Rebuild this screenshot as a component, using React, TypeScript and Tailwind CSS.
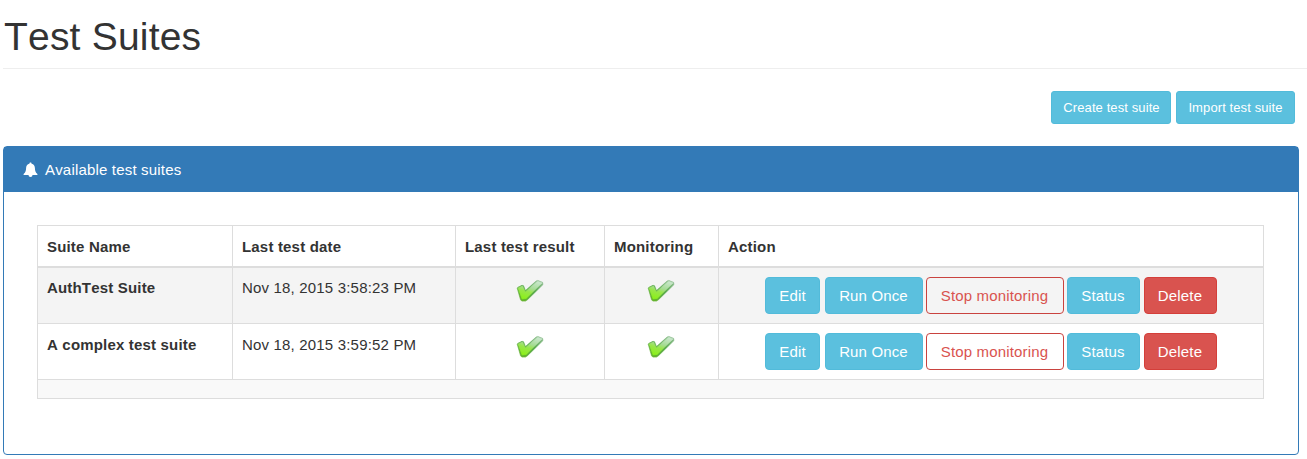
import React from "react";

type Suite = { name: string; date: string };

const suites: Suite[] = [
  { name: "AuthTest Suite", date: "Nov 18, 2015 3:58:23 PM" },
  { name: "A complex test suite", date: "Nov 18, 2015 3:59:52 PM" },
];

function BellIcon() {
  return (
    <svg width="15" height="16" viewBox="0 0 15 16" fill="#fff" className="block shrink-0">
      <path d="M7.5 0.6c.7 0 1.1.5 1.1 1.2 2.200.5 3.200 2.100 3.300 4.100.1 2.600.4 4.300 2.500 6.100v1.100H.6V12c2.100-1.800 2.400-3.500 2.500-6.100.1-2 1.100-3.600 3.300-4.100 0-.7.4-1.200 1.100-1.200z" />
      <path d="M5.500 13.100h4a2 1.900 0 0 1-4 0z" />
    </svg>
  );
}

function CheckIcon() {
  return (
    <svg width="28" height="24" viewBox="0 -0.4 28 24" className="block">
      <defs>
        <linearGradient id="checkFace" x1="0.7" y1="0" x2="0.3" y2="1">
          <stop offset="0" stopColor="#c8e6ca" />
          <stop offset="0.4" stopColor="#a6dc96" />
          <stop offset="0.62" stopColor="#98e64a" />
          <stop offset="1" stopColor="#8cf01a" />
        </linearGradient>
        <linearGradient id="checkEdge" x1="1" y1="0" x2="0.2" y2="1">
          <stop offset="0" stopColor="#96c09a" />
          <stop offset="0.5" stopColor="#55a74a" />
          <stop offset="1" stopColor="#66b42c" />
        </linearGradient>
      </defs>
      <path
        d="M1.200 8.700 2 7.800 6 5.900 7.500 6.300 9.500 11.200 20.200 1.500 21.800 1 26.600 2.900 27 5.200 11.500 20.300 9.500 21.700 5.800 21.700 4.500 20.300z"
        fill="url(#checkEdge)"
        stroke="url(#checkEdge)"
        strokeWidth="0.6"
        strokeLinejoin="round"
      />
      <path
        d="M2.100 8.600 6.500 6.600 9.300 12.500 21.500 1.800 26 3.500 10.200 19 6.100 19.500z"
        fill="url(#checkFace)"
        stroke="url(#checkFace)"
        strokeWidth="0.7"
        strokeLinejoin="round"
      />
    </svg>
  );
}

function Button({ className, children }: { className: string; children: React.ReactNode }) {
  return (
    <button
      className={`flex h-[37px] shrink-0 items-center justify-center whitespace-nowrap rounded-[4px] border text-[15px] tracking-[0.15px] ${className}`}
    >
      {children}
    </button>
  );
}

const info = "border-[#52bbda] bg-[#5bc0de] text-white";
const cell = "border-b border-r border-[#ddd] p-0 align-top";

export default function App() {
  return (
    <div
      className="h-[459px] overflow-hidden bg-white pl-[3px] text-[15px] leading-[22px] tracking-[0.18px] text-[#333] [font-kerning:none]"
      style={{ fontFamily: '"Liberation Sans", Arial, sans-serif' }}
    >
      <h1 className="h-[69px] border-b border-[#eee] pl-px pt-[15px] text-[39px] leading-[43px] tracking-[0.2px]">
        Test Suites
      </h1>

      <div className="mt-[22px] flex h-[33px] justify-end gap-[5px] pr-[12px] text-[13px] tracking-[0.1px]">
        <button className={`w-[120px] rounded-[3px] border pl-px ${info}`}>Create test suite</button>
        <button className={`w-[119px] rounded-[3px] border ${info}`}>Import test suite</button>
      </div>

      <section className="mt-[22px] h-[309px] w-[1296px] rounded-[4px] border border-[#337ab7]">
        <header className="flex h-[45px] items-center gap-[7px] bg-[#337ab7] pl-[19px] text-white">
          <BellIcon />
          <span className="pt-px">Available test suites</span>
        </header>

        <table className="ml-[33px] mt-[33px] w-[1227px] table-fixed border-separate border-spacing-0 border-l border-t border-[#ddd] text-left">
          <colgroup>
            <col className="w-[195px]" />
            <col className="w-[223px]" />
            <col className="w-[149px]" />
            <col className="w-[114px]" />
            <col className="w-[545px]" />
          </colgroup>
          <thead>
            <tr className="h-[42px]">
              {["Suite Name", "Last test date", "Last test result", "Monitoring", "Action"].map((h) => (
                <th key={h} className="border-b-2 border-r border-[#ddd] p-0 pl-[9px] pt-[2px] align-middle font-bold">
                  {h}
                </th>
              ))}
            </tr>
          </thead>
          <tbody>
            {suites.map((s, i) => (
              <tr key={s.name} className="h-[56px] odd:bg-[#f4f4f4]">
                <td className={cell}>
                  <div className={`pl-[9px] font-bold ${i === 0 ? "pt-[9px]" : "pt-[10px]"}`}>{s.name}</div>
                </td>
                <td className={cell}>
                  <div className={`pl-[9px] ${i === 0 ? "pt-[9px]" : "pt-[10px]"}`}>{s.date}</div>
                </td>
                <td className={cell}>
                  <div className="flex justify-center pt-[11px]">
                    <CheckIcon />
                  </div>
                </td>
                <td className={cell}>
                  <div className="flex justify-center pr-px pt-[11px]">
                    <CheckIcon />
                  </div>
                </td>
                <td className={cell}>
                  <div className="flex pl-[46px] pt-[9px]">
                    <Button className={`w-[55px] ${info}`}>Edit</Button>
                    <Button className={`ml-[5px] w-[98px] pr-px ${info}`}>Run Once</Button>
                    <Button className="ml-[3px] w-[138px] border-[#c9433f] pr-px text-[#d9534f]">Stop monitoring</Button>
                    <Button className={`ml-[3px] w-[73px] pr-px ${info}`}>Status</Button>
                    <Button className="ml-[4px] w-[73px] border-[#d43f3a] bg-[#d9534f] pr-px text-white">Delete</Button>
                  </div>
                </td>
              </tr>
            ))}
            <tr className="h-[19px] bg-[#f9f9f9]">
              <td colSpan={5} className={cell} />
            </tr>
          </tbody>
        </table>
      </section>
    </div>
  );
}
